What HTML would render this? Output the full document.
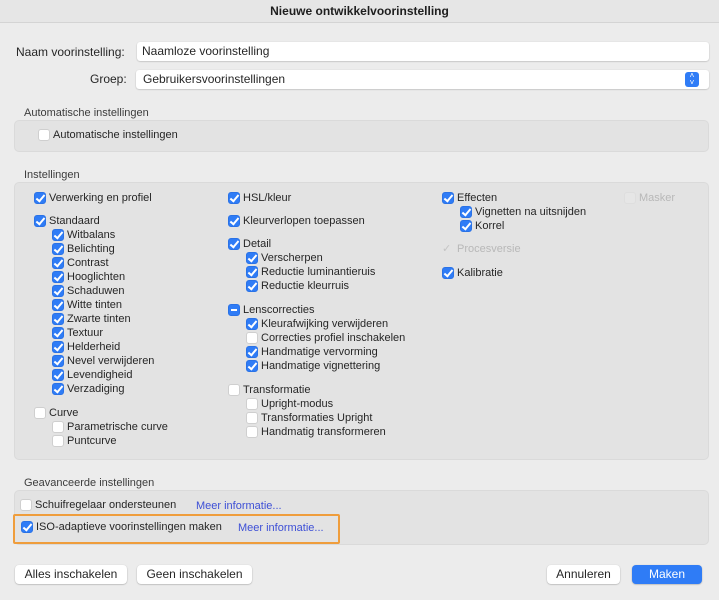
<!DOCTYPE html>
<html><head><meta charset="utf-8"><style>
*{box-sizing:border-box;margin:0;padding:0}
body{width:719px;height:600px;background:#ececec;font-family:"Liberation Sans",sans-serif;font-size:11px;color:#262626;position:relative;overflow:hidden}
.t{position:absolute;left:0;top:0;width:719px;height:23px;background:#e6e6e6;border-bottom:1px solid #d4d4d4;text-align:center;font-weight:bold;font-size:12px;line-height:22px;color:#1e1e1e}
.a{position:absolute}
.r{position:absolute;display:flex;align-items:center;height:14px;white-space:nowrap;line-height:14px}
.b{display:inline-block;width:12px;height:12px;border-radius:3px;background:#fff;border:1px solid #cfcfcf;margin-right:3px;flex:none;position:relative}
.on{background:#2f7cf6;border-color:#2a72e6}
.on::after{content:"";position:absolute;left:3px;top:0px;width:3px;height:7px;border:solid #fff;border-width:0 2px 2px 0;transform:rotate(40deg)}
.mi{background:#2f7cf6;border-color:#2a72e6}
.mi::after{content:"";position:absolute;left:2px;top:4px;width:6px;height:2px;background:#fff}
.dis{color:#b8b8b8}
.panel{position:absolute;left:14px;width:695px;background:#e3e3e3;border:1px solid #dadada;border-radius:5px}
.h{position:absolute;left:24px;color:#3c3c3c}
.in{position:absolute;background:#fff;border-radius:3px;box-shadow:0 0.5px 1.5px rgba(0,0,0,.25);padding-left:5px;line-height:19px;font-size:12px}
.btn{position:absolute;height:19px;background:#fff;border-radius:4px;box-shadow:0 0.5px 1.5px rgba(0,0,0,.3);text-align:center;line-height:19px;font-size:12px}
.lnk{color:#3d4fd6}
</style></head><body>
<div class="t">Nieuwe ontwikkelvoorinstelling</div>
<div class="a" style="left:16px;top:45px;font-size:12px">Naam voorinstelling:</div>
<div class="in" style="left:137px;top:42px;width:572px;height:19px">Naamloze voorinstelling</div>
<div class="a" style="left:90px;top:72px;font-size:12px">Groep:</div>
<div class="in" style="left:136px;top:70px;width:573px;height:19px;padding-left:7px">Gebruikersvoorinstellingen</div>
<div class="a" style="left:685px;top:72px;width:14px;height:15px;background:#2f7cf6;border-radius:3px;color:#fff;font-size:8px;line-height:7px;text-align:center">˄<br>˅</div>

<div class="h" style="top:107px">Automatische instellingen</div>
<div class="panel" style="top:120px;height:32px"></div>
<div class="r" style="left:38px;top:128px"><i class="b"></i>Automatische instellingen</div>

<div class="h" style="top:169px">Instellingen</div>
<div class="panel" style="top:182px;height:278px"></div>

<div class="r" style="left:34px;top:191px"><i class="b on"></i>Verwerking en profiel</div>
<div class="r" style="left:34px;top:214px"><i class="b on"></i>Standaard</div>
<div class="r" style="left:52px;top:228px"><i class="b on"></i>Witbalans</div>
<div class="r" style="left:52px;top:242px"><i class="b on"></i>Belichting</div>
<div class="r" style="left:52px;top:256px"><i class="b on"></i>Contrast</div>
<div class="r" style="left:52px;top:270px"><i class="b on"></i>Hooglichten</div>
<div class="r" style="left:52px;top:284px"><i class="b on"></i>Schaduwen</div>
<div class="r" style="left:52px;top:298px"><i class="b on"></i>Witte tinten</div>
<div class="r" style="left:52px;top:312px"><i class="b on"></i>Zwarte tinten</div>
<div class="r" style="left:52px;top:326px"><i class="b on"></i>Textuur</div>
<div class="r" style="left:52px;top:340px"><i class="b on"></i>Helderheid</div>
<div class="r" style="left:52px;top:354px"><i class="b on"></i>Nevel verwijderen</div>
<div class="r" style="left:52px;top:368px"><i class="b on"></i>Levendigheid</div>
<div class="r" style="left:52px;top:382px"><i class="b on"></i>Verzadiging</div>
<div class="r" style="left:34px;top:406px"><i class="b"></i>Curve</div>
<div class="r" style="left:52px;top:420px"><i class="b"></i>Parametrische curve</div>
<div class="r" style="left:52px;top:434px"><i class="b"></i>Puntcurve</div>

<div class="r" style="left:228px;top:191px"><i class="b on"></i>HSL/kleur</div>
<div class="r" style="left:228px;top:214px"><i class="b on"></i>Kleurverlopen toepassen</div>
<div class="r" style="left:228px;top:237px"><i class="b on"></i>Detail</div>
<div class="r" style="left:246px;top:251px"><i class="b on"></i>Verscherpen</div>
<div class="r" style="left:246px;top:265px"><i class="b on"></i>Reductie luminantieruis</div>
<div class="r" style="left:246px;top:279px"><i class="b on"></i>Reductie kleurruis</div>
<div class="r" style="left:228px;top:303px"><i class="b mi"></i>Lenscorrecties</div>
<div class="r" style="left:246px;top:317px"><i class="b on"></i>Kleurafwijking verwijderen</div>
<div class="r" style="left:246px;top:331px"><i class="b"></i>Correcties profiel inschakelen</div>
<div class="r" style="left:246px;top:345px"><i class="b on"></i>Handmatige vervorming</div>
<div class="r" style="left:246px;top:359px"><i class="b on"></i>Handmatige vignettering</div>
<div class="r" style="left:228px;top:383px"><i class="b"></i>Transformatie</div>
<div class="r" style="left:246px;top:397px"><i class="b"></i>Upright-modus</div>
<div class="r" style="left:246px;top:411px"><i class="b"></i>Transformaties Upright</div>
<div class="r" style="left:246px;top:425px"><i class="b"></i>Handmatig transformeren</div>

<div class="r" style="left:442px;top:191px"><i class="b on"></i>Effecten</div>
<div class="r" style="left:460px;top:205px"><i class="b on"></i>Vignetten na uitsnijden</div>
<div class="r" style="left:460px;top:219px"><i class="b on"></i>Korrel</div>
<div class="r dis" style="left:442px;top:242px"><span style="width:15px;color:#c4c4c4">✓</span>Procesversie</div>
<div class="r" style="left:442px;top:266px"><i class="b on"></i>Kalibratie</div>
<div class="r dis" style="left:624px;top:191px"><i class="b" style="background:#e6e6e6;border-color:#dedede"></i>Masker</div>

<div class="h" style="top:477px">Geavanceerde instellingen</div>
<div class="panel" style="top:490px;height:55px"></div>
<div class="r" style="left:20px;top:498px"><i class="b"></i>Schuifregelaar ondersteunen</div>
<div class="r lnk" style="left:196px;top:499px">Meer informatie...</div>
<div class="a" style="left:13px;top:514px;width:327px;height:30px;border:2px solid #ef9d3c;border-radius:2px"></div>
<div class="r" style="left:21px;top:520px"><i class="b on"></i>ISO-adaptieve voorinstellingen maken</div>
<div class="r lnk" style="left:238px;top:521px">Meer informatie...</div>

<div class="btn" style="left:15px;top:565px;width:112px">Alles inschakelen</div>
<div class="btn" style="left:137px;top:565px;width:115px">Geen inschakelen</div>
<div class="btn" style="left:547px;top:565px;width:73px">Annuleren</div>
<div class="btn" style="left:632px;top:565px;width:70px;background:#2f7cf6;color:#fff">Maken</div>
</body></html>
